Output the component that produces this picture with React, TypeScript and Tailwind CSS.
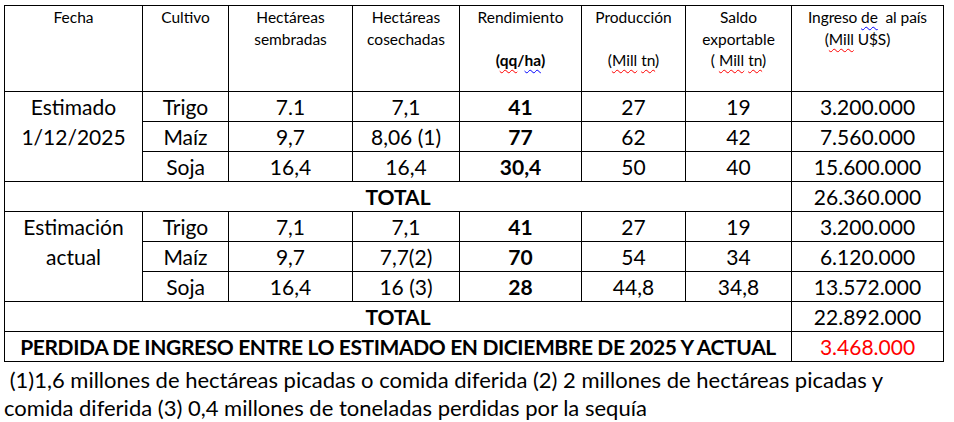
import React from "react";

type Row = {
  cultivo: string;
  sembradas: string;
  cosechadas: string;
  rendimiento: string;
  produccion: string;
  saldo: string;
  ingreso: string;
};

const estimado: Row[] = [
  { cultivo: "Trigo", sembradas: "7.1", cosechadas: "7,1", rendimiento: "41", produccion: "27", saldo: "19", ingreso: "3.200.000" },
  { cultivo: "Maíz", sembradas: "9,7", cosechadas: "8,06 (1)", rendimiento: "77", produccion: "62", saldo: "42", ingreso: "7.560.000" },
  { cultivo: "Soja", sembradas: "16,4", cosechadas: "16,4", rendimiento: "30,4", produccion: "50", saldo: "40", ingreso: "15.600.000" },
];

const actual: Row[] = [
  { cultivo: "Trigo", sembradas: "7,1", cosechadas: "7,1", rendimiento: "41", produccion: "27", saldo: "19", ingreso: "3.200.000" },
  { cultivo: "Maíz", sembradas: "9,7", cosechadas: "7,7(2)", rendimiento: "70", produccion: "54", saldo: "34", ingreso: "6.120.000" },
  { cultivo: "Soja", sembradas: "16,4", cosechadas: "16 (3)", rendimiento: "28", produccion: "44,8", saldo: "34,8", ingreso: "13.572.000" },
];

const cell = "border border-black text-center align-middle p-0";
const red = "underline decoration-wavy decoration-[#ff0000] decoration-1 underline-offset-[3px]";
const blue = "underline decoration-wavy decoration-[#0000ff] decoration-1 underline-offset-[3px]";

function Block({ fecha, rows }: { fecha: string[]; rows: Row[] }) {
  return (
    <>
      {rows.map((r, i) => (
        <tr key={r.cultivo} className="h-[30px]">
          {i === 0 && (
            <td rowSpan={3} className="border border-black text-center align-top p-0 leading-[30px]">
              {fecha.map((f) => (
                <div key={f}>{f}</div>
              ))}
            </td>
          )}
          <td className={cell}>{r.cultivo}</td>
          <td className={cell}>{r.sembradas}</td>
          <td className={cell}>{r.cosechadas}</td>
          <td className={`${cell} font-bold`}>{r.rendimiento}</td>
          <td className={cell}>{r.produccion}</td>
          <td className={cell}>{r.saldo}</td>
          <td className={cell}>{r.ingreso}</td>
        </tr>
      ))}
    </>
  );
}

export default function App() {
  return (
    <div className="w-[954px] h-[422px] bg-white text-black font-['Lato',sans-serif] pt-[5px] pl-[4px]">
      <table className="table-fixed border-collapse w-[940px] text-[21px] leading-[29px]">
        <colgroup>
          <col className="w-[138px]" />
          <col className="w-[86px]" />
          <col className="w-[124px]" />
          <col className="w-[107px]" />
          <col className="w-[122px]" />
          <col className="w-[104px]" />
          <col className="w-[106px]" />
          <col className="w-[152px]" />
        </colgroup>
        <thead>
          <tr className="h-[86px] text-[15.5px] leading-[21.5px]">
            <th className="border border-black align-top font-normal pt-[1px]">Fecha</th>
            <th className="border border-black align-top font-normal pt-[1px]">Cultivo</th>
            <th className="border border-black align-top font-normal pt-[1px]">
              <div>Hectáreas</div>
              <div>sembradas</div>
            </th>
            <th className="border border-black align-top font-normal pt-[1px]">
              <div>Hectáreas</div>
              <div>cosechadas</div>
            </th>
            <th className="border border-black align-top font-normal pt-[1px]">
              <div>Rendimiento</div>
              <div>&nbsp;</div>
              <div className="font-bold">
                (<span className={red}>qq</span>/<span className={blue}>ha</span>)
              </div>
            </th>
            <th className="border border-black align-top font-normal pt-[1px]">
              <div>Producción</div>
              <div>&nbsp;</div>
              <div>
                (<span className={red}>Mill</span> <span className={red}>tn</span>)
              </div>
            </th>
            <th className="border border-black align-top font-normal pt-[1px]">
              <div>Saldo</div>
              <div>exportable</div>
              <div>
                ( <span className={red}>Mill</span> <span className={red}>tn</span>)
              </div>
            </th>
            <th className="border border-black align-top font-normal pt-[1px] tracking-[-0.1px]">
              <div>
                Ingreso <span className={blue}>de</span>&nbsp; al país
              </div>
              <div className="pr-[20px]">
                (<span className={red}>Mill</span> U$S)
              </div>
            </th>
          </tr>
        </thead>
        <tbody>
          <Block fecha={["Estimado", "1/12/2025"]} rows={estimado} />
          <tr className="h-[30px]">
            <td colSpan={7} className={`${cell} font-bold`}>TOTAL</td>
            <td className={cell}>26.360.000</td>
          </tr>
          <Block fecha={["Estimación", "actual"]} rows={actual} />
          <tr className="h-[30px]">
            <td colSpan={7} className={`${cell} font-bold`}>TOTAL</td>
            <td className={cell}>22.892.000</td>
          </tr>
          <tr className="h-[30px]">
            <td colSpan={7} className={`${cell} font-bold tracking-[-0.38px]`}>
              PERDIDA DE INGRESO ENTRE LO ESTIMADO EN DICIEMBRE DE 2025 Y ACTUAL
            </td>
            <td className={`${cell} text-[#ff0000]`}>3.468.000</td>
          </tr>
        </tbody>
      </table>
      <div className="mt-[4px] text-[22px] leading-[28px]">
        <div>&nbsp;(1)1,6 millones de hectáreas picadas o comida diferida (2) 2 millones de hectáreas picadas y</div>
        <div>comida diferida (3) 0,4 millones de toneladas perdidas por la sequía</div>
      </div>
    </div>
  );
}
